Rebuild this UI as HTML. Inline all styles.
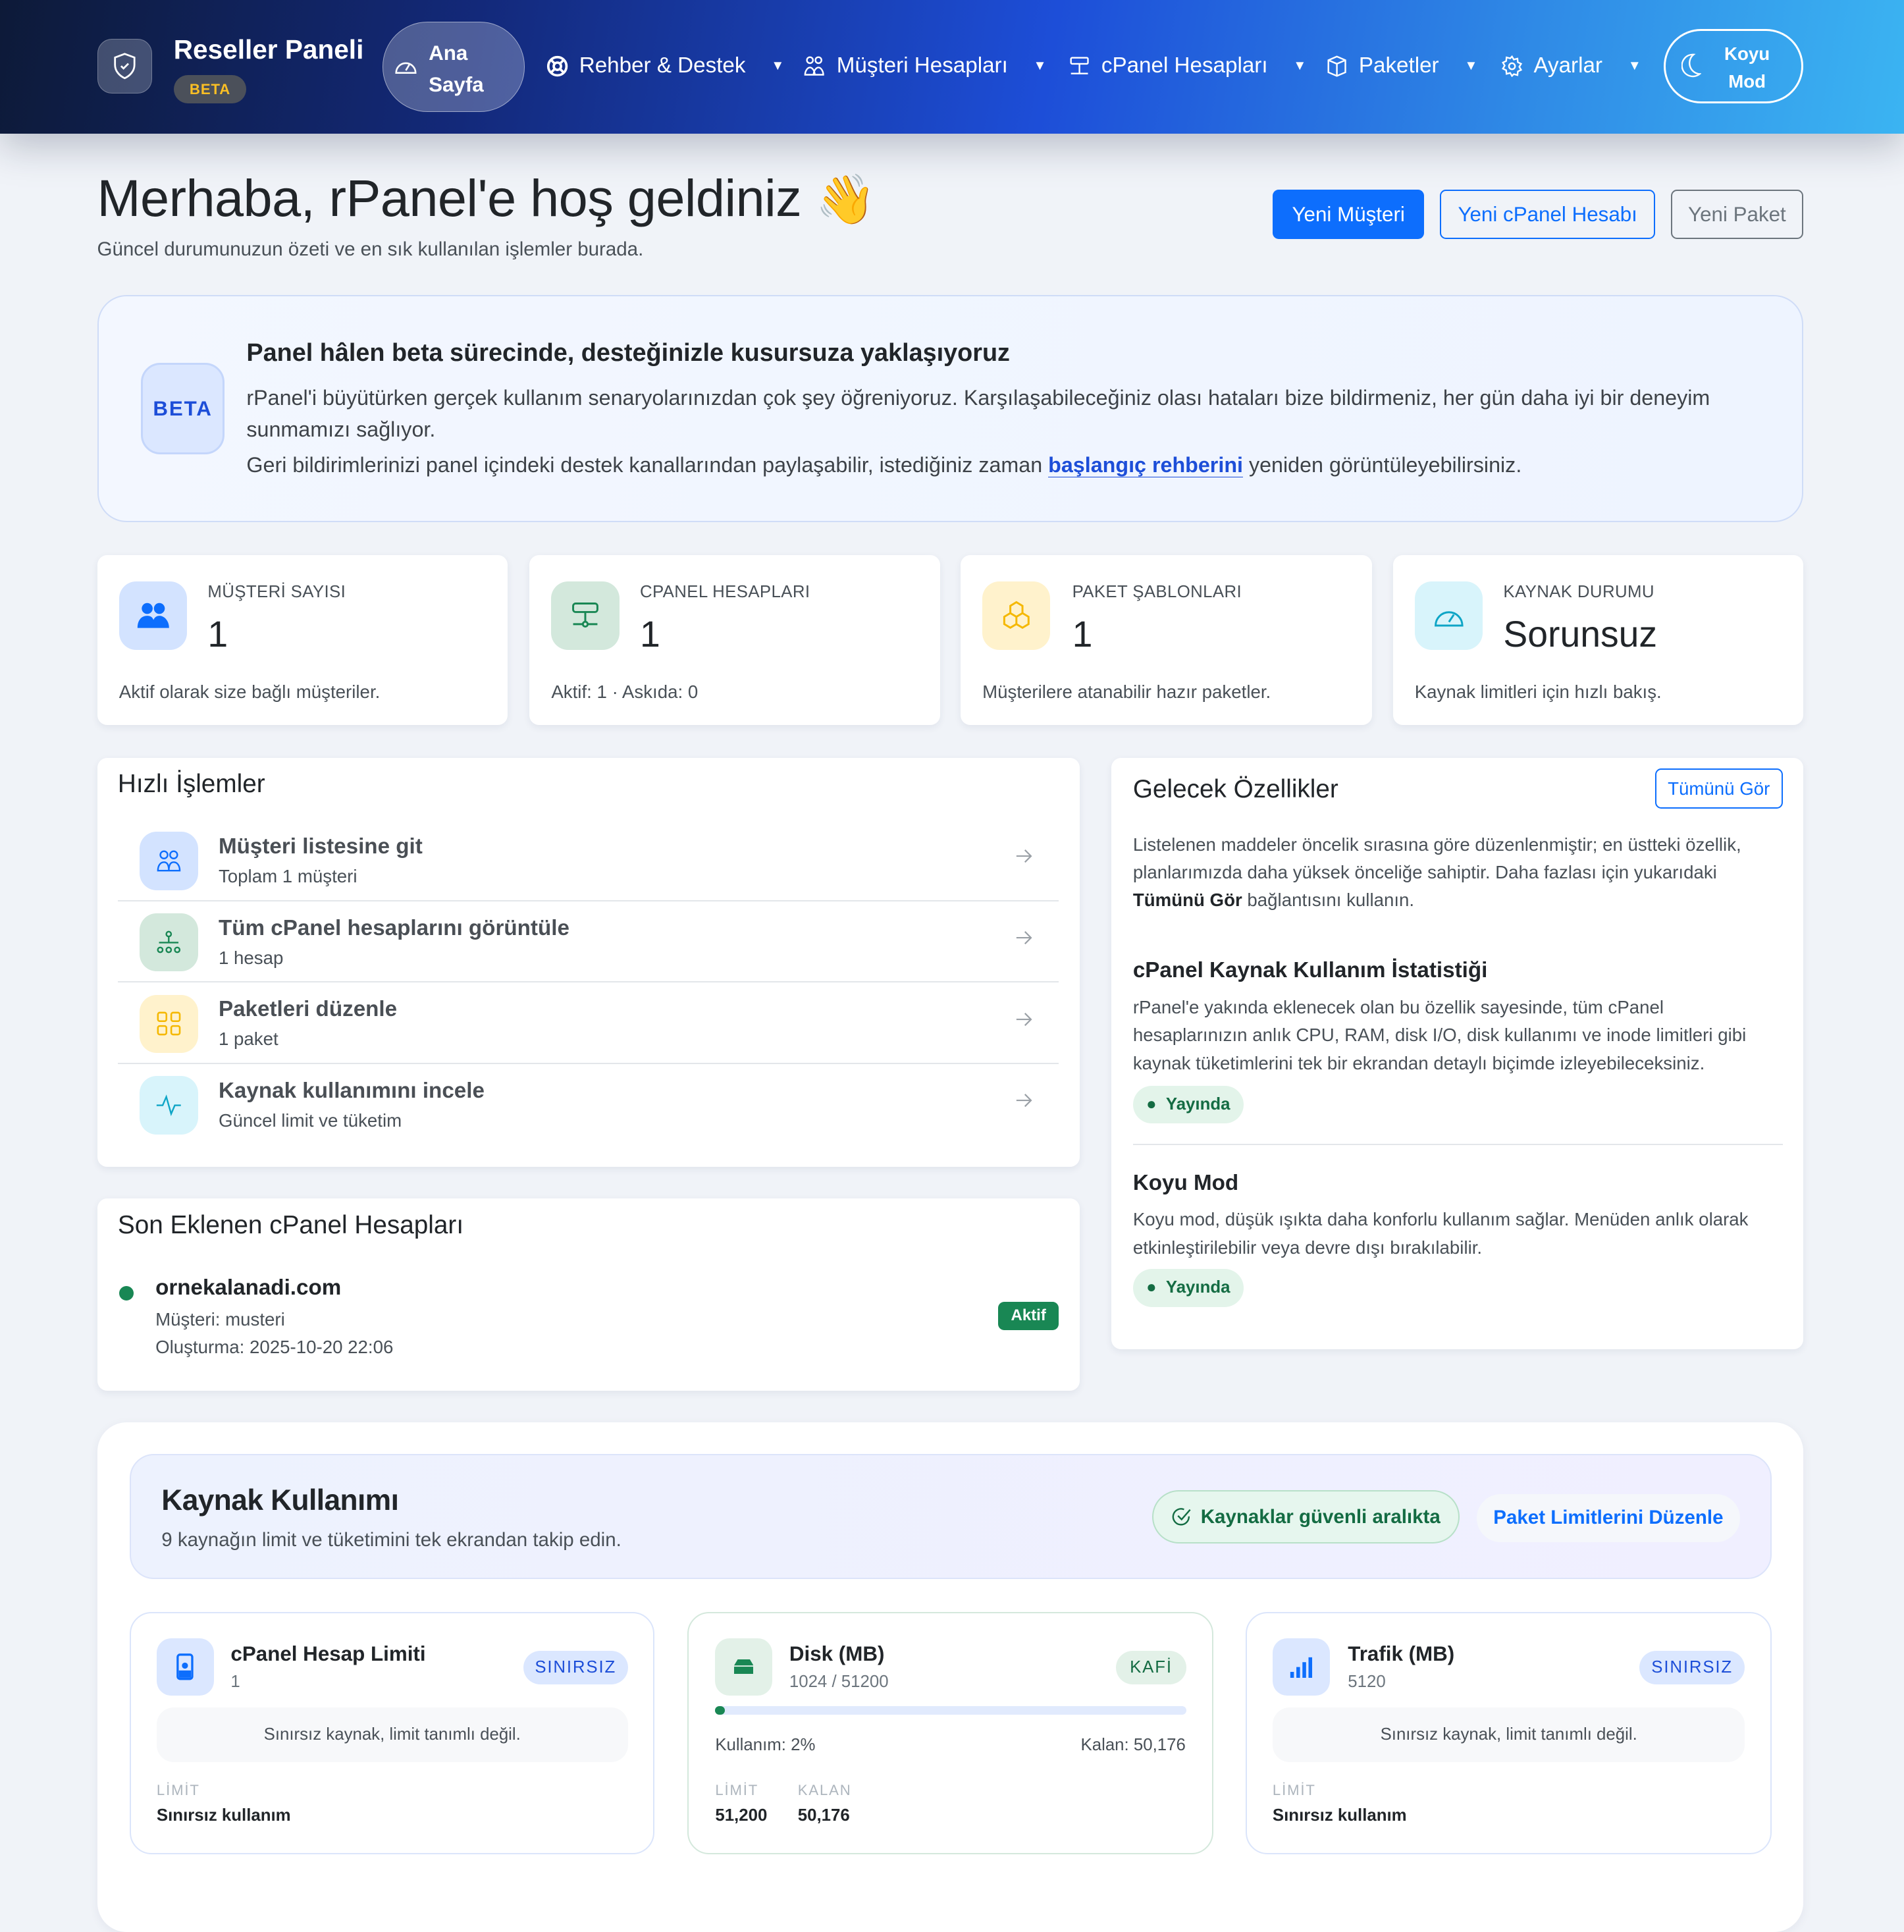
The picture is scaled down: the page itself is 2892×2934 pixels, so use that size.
<!DOCTYPE html>
<html><head><meta charset="utf-8"><style>
html{zoom:1.8444}
*{box-sizing:border-box;margin:0;padding:0}
body{width:1568px;height:1557px;overflow:hidden;background:#f0f3f8;font-family:"Liberation Sans","DejaVu Sans",sans-serif;color:#212529;position:relative}
.a{position:absolute}
.hdr{left:0;top:0;width:1568px;height:110px;background:linear-gradient(100deg,#0d1a38 0%,#13297a 25%,#1d4ed8 55%,#2f8ae6 80%,#3bb4f2 100%);box-shadow:0 10px 30px rgba(20,30,60,.25)}
.nav{color:#fff;font-size:18px;top:44px;display:flex;align-items:center;gap:9px;font-weight:500}
.car{font-size:11px;margin-left:12px}
.card{background:#fff;border-radius:8px;box-shadow:0 2px 6px rgba(30,40,80,.07)}
.ic{width:56px;height:56px;border-radius:14px;display:flex;align-items:center;justify-content:center}
.lbl{font-size:14px;color:#495057;letter-spacing:.2px}
.val{font-size:30px;color:#212529}
.dsc{font-size:15px;color:#495057}
.row{left:17px;width:775px;height:67px;border-bottom:1.5px solid #e3e6ea}
.row .ic{width:48px;height:48px;position:absolute;left:18px;top:10px}
.row .t{position:absolute;left:83px;top:12px;font-size:18px;font-weight:bold;color:#4a4f55}
.row .s{position:absolute;left:83px;top:38px;font-size:15px;color:#495057}
.row .ar{position:absolute;right:22px;top:22px}
.pill{border-radius:20px;font-size:14px;font-weight:bold;display:flex;align-items:center;justify-content:center}
.rc{background:#fff;border-radius:18px;border:1.5px solid #dbe5fb}
</style></head><body>
<div class="a hdr"></div>
<div class="a" style="left:80px;top:32px;width:45px;height:45px;border-radius:12px;background:rgba(255,255,255,.22);border:1px solid rgba(255,255,255,.25);display:flex;align-items:center;justify-content:center">
<svg width="20" height="22" viewBox="0 0 20 22" fill="none" stroke="#fff" stroke-width="1.5"><path d="M10 1L2 4v6c0 5 3.5 9 8 11 4.5-2 8-6 8-11V4z"/><path d="M7 11l2 2 4-4"/></svg></div>
<div class="a" style="left:143px;top:28px;color:#fff;font-size:22px;font-weight:bold">Reseller Paneli</div>
<div class="a" style="left:143px;top:62px;width:60px;height:23px;border-radius:12px;background:#4b505a;color:#fbbf24;font-size:12px;font-weight:bold;display:flex;align-items:center;justify-content:center;letter-spacing:.5px">BETA</div>
<div class="a" style="left:315px;top:18px;width:117px;height:74px;border-radius:37px;background:rgba(255,255,255,.25);border:1px solid rgba(255,255,255,.45)"></div>
<svg class="a" style="left:324px;top:45px" width="20" height="18" viewBox="0 0 20 18" fill="none" stroke="#fff" stroke-width="1.4"><path d="M2 15a8 8 0 1 1 16 0z"/><path d="M10 13l3-5"/></svg>
<div class="a" style="left:353px;top:31px;color:#fff;font-size:17px;font-weight:bold;line-height:26px">Ana<br>Sayfa</div>
<div class="a nav" style="left:450px"><svg width="18" height="18" viewBox="0 0 18 18" fill="none" stroke="#fff" stroke-width="2"><circle cx="9" cy="9" r="7.5"/><circle cx="9" cy="9" r="3"/><path d="M4 4l3 3M14 4l-3 3M4 14l3-3M14 14l-3-3"/></svg>Rehber &amp; Destek<span class="car">▼</span></div>
<div class="a nav" style="left:662px"><svg width="18" height="18" viewBox="0 0 18 18" fill="none" stroke="#fff" stroke-width="1.3"><circle cx="5" cy="4" r="2.5"/><circle cx="12" cy="4" r="2.5"/><path d="M1 16c0-3 2-6 4-6s4 3 4 6zM8 16c0-3 2-6 4-6s4 3 4 6z"/></svg>Müşteri Hesapları<span class="car">▼</span></div>
<div class="a nav" style="left:880px"><svg width="18" height="18" viewBox="0 0 18 18" fill="none" stroke="#fff" stroke-width="1.3"><rect x="2" y="2" width="14" height="5" rx="1"/><path d="M9 7v8M2 15h14"/></svg>cPanel Hesapları<span class="car">▼</span></div>
<div class="a nav" style="left:1092px"><svg width="18" height="18" viewBox="0 0 18 18" fill="none" stroke="#fff" stroke-width="1.3"><path d="M9 1l7 3v10l-7 3-7-3V4zM2 4l7 3 7-3M9 7v10"/></svg>Paketler<span class="car">▼</span></div>
<div class="a nav" style="left:1236px"><svg width="18" height="18" viewBox="0 0 18 18" fill="none" stroke="#fff" stroke-width="1.3"><circle cx="9" cy="9" r="2.5"/><path d="M9 1l1.5 2.5 3-.8.3 3 2.7 1.3-1.5 2.5 1.5 2.5-2.7 1.3-.3 3-3-.8L9 17l-1.5-2.5-3 .8-.3-3L1.5 11 3 8.5 1.5 6l2.7-1.3.3-3 3 .8z"/></svg>Ayarlar<span class="car">▼</span></div>
<div class="a" style="left:1370px;top:24px;width:115px;height:61px;border-radius:31px;border:2px solid #fff"></div>
<svg class="a" style="left:1385px;top:44px" width="16" height="20" viewBox="0 0 16 20" fill="none" stroke="#fff" stroke-width="1.3"><path d="M10 1a9 9 0 1 0 5 16A9 9 0 0 1 10 1z"/></svg>
<div class="a" style="left:1420px;top:33px;color:#fff;font-size:15px;font-weight:bold;line-height:23px;text-align:center">Koyu<br>Mod</div>

<div class="a" style="left:80px;top:138px;font-size:43px;font-weight:500;letter-spacing:-.3px">Merhaba, rPanel'e hoş geldiniz <span style="font-size:40px">👋</span></div>
<div class="a" style="left:80px;top:196px;font-size:16px;color:#495057">Güncel durumunuzun özeti ve en sık kullanılan işlemler burada.</div>
<div class="a" style="left:1048px;top:156px;width:125px;height:41px;border-radius:5px;background:#0d6efd;color:#fff;font-size:17px;display:flex;align-items:center;justify-content:center">Yeni Müşteri</div>
<div class="a" style="left:1186px;top:156px;width:177px;height:41px;border-radius:5px;border:1.5px solid #0d6efd;color:#0d6efd;font-size:17px;display:flex;align-items:center;justify-content:center">Yeni cPanel Hesabı</div>
<div class="a" style="left:1376px;top:156px;width:109px;height:41px;border-radius:5px;border:1.5px solid #6c757d;color:#6c757d;font-size:17px;display:flex;align-items:center;justify-content:center">Yeni Paket</div>

<div class="a" style="left:80px;top:243px;width:1405px;height:187px;border-radius:24px;background:linear-gradient(90deg,#f3f7ff,#eef4ff);border:1.5px solid #cfdcf7"></div>
<div class="a" style="left:116px;top:299px;width:69px;height:75px;border-radius:16px;background:#dbe7ff;border:2px solid #c4d6fb;color:#1d4ed8;font-weight:bold;font-size:17px;letter-spacing:1px;display:flex;align-items:center;justify-content:center">BETA</div>
<div class="a" style="left:203px;top:279px;font-size:20.5px;font-weight:bold">Panel hâlen beta sürecinde, desteğinizle kusursuza yaklaşıyoruz</div>
<div class="a" style="left:203px;top:315px;width:1250px;font-size:17.5px;line-height:26px;color:#3d4248">rPanel'i büyütürken gerçek kullanım senaryolarınızdan çok şey öğreniyoruz. Karşılaşabileceğiniz olası hataları bize bildirmeniz, her gün daha iyi bir deneyim sunmamızı sağlıyor.</div>
<div class="a" style="left:203px;top:373px;font-size:17.5px;color:#3d4248">Geri bildirimlerinizi panel içindeki destek kanallarından paylaşabilir, istediğiniz zaman <b style="color:#1d4ed8;border-bottom:1px solid #1d4ed8">başlangıç rehberini</b> yeniden görüntüleyebilirsiniz.</div>

<div class="a card" style="left:80px;top:457px;width:338px;height:140px"></div>
<div class="a card" style="left:436px;top:457px;width:338px;height:140px"></div>
<div class="a card" style="left:791px;top:457px;width:339px;height:140px"></div>
<div class="a card" style="left:1147px;top:457px;width:338px;height:140px"></div>
<div class="a ic" style="left:98px;top:479px;background:#d3e3ff"><svg width="28" height="24" viewBox="0 0 28 24" fill="#0d6efd"><circle cx="9" cy="6" r="4.5"/><circle cx="19" cy="6" r="4.5"/><path d="M1 22c0-6 3-10 8-10s6 4 6 10zM13 22c0-6 2-10 6-10s8 4 8 10z"/></svg></div>
<div class="a ic" style="left:454px;top:479px;background:#d3e8dc"><svg width="26" height="26" viewBox="0 0 26 26" fill="none" stroke="#198754" stroke-width="1.6"><rect x="3" y="3" width="20" height="7" rx="2"/><path d="M13 10v10M3 20h20"/><circle cx="13" cy="20" r="2" fill="#d3e8dc"/></svg></div>
<div class="a ic" style="left:809px;top:479px;background:#fff2cc"><svg width="28" height="28" viewBox="0 0 28 28" fill="none" stroke="#f5b800" stroke-width="1.6"><path d="M14 3l5 3v6l-5 3-5-3V6zM9 12l5 3v6l-5 3-5-3v-6zM19 12l5 3v6l-5 3-5-3v-6z"/></svg></div>
<div class="a ic" style="left:1165px;top:479px;background:#d8f4fb"><svg width="28" height="22" viewBox="0 0 28 22" fill="none" stroke="#0ea5c6" stroke-width="1.6"><path d="M3 19a11 11 0 1 1 22 0z"/><path d="M14 16l4-6"/></svg></div>
<div class="a lbl" style="left:171px;top:480px">MÜŞTERİ SAYISI</div><div class="a val" style="left:171px;top:505px">1</div><div class="a dsc" style="left:98px;top:561px">Aktif olarak size bağlı müşteriler.</div>
<div class="a lbl" style="left:527px;top:480px">CPANEL HESAPLARI</div><div class="a val" style="left:527px;top:505px">1</div><div class="a dsc" style="left:454px;top:561px">Aktif: 1 · Askıda: 0</div>
<div class="a lbl" style="left:883px;top:480px">PAKET ŞABLONLARI</div><div class="a val" style="left:883px;top:505px">1</div><div class="a dsc" style="left:809px;top:561px">Müşterilere atanabilir hazır paketler.</div>
<div class="a lbl" style="left:1238px;top:480px">KAYNAK DURUMU</div><div class="a val" style="left:1238px;top:505px;font-weight:500">Sorunsuz</div><div class="a dsc" style="left:1165px;top:561px">Kaynak limitleri için hızlı bakış.</div>

<div class="a card" style="left:80px;top:624px;width:809px;height:337px">
<div class="a" style="left:17px;top:10px;font-size:21px">Hızlı İşlemler</div>
<div class="a row" style="top:51px"><div class="ic" style="background:#d3e3ff"><svg width="20" height="20" viewBox="0 0 20 20" fill="none" stroke="#0d6efd" stroke-width="1.3"><circle cx="6" cy="5" r="3"/><circle cx="14" cy="5" r="3"/><path d="M1 18c0-4 2-7 5-7s4 3 4 7zM10 18c0-4 1-7 4-7s5 3 5 7z"/></svg></div><div class="t">Müşteri listesine git</div><div class="s">Toplam 1 müşteri</div><div class="ar"><svg width="14" height="12" viewBox="0 0 14 12" fill="none" stroke="#9aa0a6" stroke-width="1.2"><path d="M1 6h12M8 1l5 5-5 5"/></svg></div></div>
<div class="a row" style="top:118px"><div class="ic" style="background:#d3e8dc"><svg width="22" height="20" viewBox="0 0 22 20" fill="none" stroke="#198754" stroke-width="1.3"><circle cx="11" cy="3" r="2"/><path d="M11 5v5M3 10h16"/><circle cx="4" cy="16" r="2"/><circle cx="11" cy="16" r="2"/><circle cx="18" cy="16" r="2"/></svg></div><div class="t">Tüm cPanel hesaplarını görüntüle</div><div class="s">1 hesap</div><div class="ar"><svg width="14" height="12" viewBox="0 0 14 12" fill="none" stroke="#9aa0a6" stroke-width="1.2"><path d="M1 6h12M8 1l5 5-5 5"/></svg></div></div>
<div class="a row" style="top:185px"><div class="ic" style="background:#fff2cc"><svg width="20" height="20" viewBox="0 0 20 20" fill="none" stroke="#f5b800" stroke-width="1.4"><rect x="1" y="1" width="7" height="7" rx="1.5"/><rect x="12" y="1" width="7" height="7" rx="1.5"/><rect x="1" y="12" width="7" height="7" rx="1.5"/><rect x="12" y="12" width="7" height="7" rx="1.5"/></svg></div><div class="t">Paketleri düzenle</div><div class="s">1 paket</div><div class="ar"><svg width="14" height="12" viewBox="0 0 14 12" fill="none" stroke="#9aa0a6" stroke-width="1.2"><path d="M1 6h12M8 1l5 5-5 5"/></svg></div></div>
<div class="a row" style="top:252px;border:none"><div class="ic" style="background:#d8f4fb"><svg width="22" height="18" viewBox="0 0 22 18" fill="none" stroke="#0ea5c6" stroke-width="1.3"><path d="M1 9h5l3-7 4 14 3-7h5"/></svg></div><div class="t">Kaynak kullanımını incele</div><div class="s">Güncel limit ve tüketim</div><div class="ar"><svg width="14" height="12" viewBox="0 0 14 12" fill="none" stroke="#9aa0a6" stroke-width="1.2"><path d="M1 6h12M8 1l5 5-5 5"/></svg></div></div>
</div>

<div class="a card" style="left:80px;top:987px;width:809px;height:158px">
<div class="a" style="left:17px;top:10px;font-size:21px">Son Eklenen cPanel Hesapları</div>
<div class="a" style="left:18px;top:72px;width:12px;height:12px;border-radius:6px;background:#198754"></div>
<div class="a" style="left:48px;top:63px;font-size:18px;font-weight:bold">ornekalanadi.com</div>
<div class="a" style="left:48px;top:88px;font-size:15px;color:#495057;line-height:23px">Müşteri: musteri<br>Oluşturma: 2025-10-20 22:06</div>
<div class="a" style="left:742px;top:85px;width:50px;height:23px;border-radius:5px;background:#198754;color:#fff;font-size:13px;font-weight:bold;display:flex;align-items:center;justify-content:center">Aktif</div>
</div>

<div class="a card" style="left:915px;top:624px;width:570px;height:487px">
<div class="a" style="left:18px;top:14px;font-size:21px">Gelecek Özellikler</div>
<div class="a" style="left:448px;top:9px;width:105px;height:33px;border:1.5px solid #0d6efd;border-radius:5px;color:#0d6efd;font-size:15px;display:flex;align-items:center;justify-content:center">Tümünü Gör</div>
<div class="a" style="left:18px;top:60px;width:535px;font-size:15px;line-height:23px;color:#495057">Listelenen maddeler öncelik sırasına göre düzenlenmiştir; en üstteki özellik, planlarımızda daha yüksek önceliğe sahiptir. Daha fazlası için yukarıdaki <b style="color:#212529">Tümünü Gör</b> bağlantısını kullanın.</div>
<div class="a" style="left:18px;top:165px;font-size:18px;font-weight:bold">cPanel Kaynak Kullanım İstatistiği</div>
<div class="a" style="left:18px;top:194px;width:535px;font-size:15px;line-height:23px;color:#495057">rPanel'e yakında eklenecek olan bu özellik sayesinde, tüm cPanel hesaplarınızın anlık CPU, RAM, disk I/O, disk kullanımı ve inode limitleri gibi kaynak tüketimlerini tek bir ekrandan detaylı biçimde izleyebileceksiniz.</div>
<div class="a pill" style="left:18px;top:270px;width:91px;height:31px;background:#e3f4ea;color:#146c43">● &nbsp;Yayında</div>
<div class="a" style="left:18px;top:318px;width:535px;border-top:1.5px solid #e3e6ea"></div>
<div class="a" style="left:18px;top:340px;font-size:18px;font-weight:bold">Koyu Mod</div>
<div class="a" style="left:18px;top:369px;width:535px;font-size:15px;line-height:23px;color:#495057">Koyu mod, düşük ışıkta daha konforlu kullanım sağlar. Menüden anlık olarak etkinleştirilebilir veya devre dışı bırakılabilir.</div>
<div class="a pill" style="left:18px;top:421px;width:91px;height:31px;background:#e3f4ea;color:#146c43">● &nbsp;Yayında</div>
</div>

<div class="a" style="left:80px;top:1171px;width:1405px;height:420px;border-radius:24px;background:#fff;box-shadow:0 2px 8px rgba(30,40,80,.06)"></div>
<div class="a" style="left:107px;top:1197px;width:1352px;height:103px;border-radius:20px;background:linear-gradient(90deg,#edf2fe,#f0efff);border:1.5px solid #dce4fa"></div>
<div class="a" style="left:133px;top:1222px;font-size:24px;font-weight:bold;letter-spacing:-.3px">Kaynak Kullanımı</div>
<div class="a" style="left:133px;top:1259px;font-size:16px;color:#495057">9 kaynağın limit ve tüketimini tek ekrandan takip edin.</div>
<div class="a pill" style="left:949px;top:1227px;width:253px;height:44px;border-radius:22px;background:#e6f6ee;border:1.5px solid #b7e0c8;color:#146c43;font-size:16px"><svg width="16" height="16" viewBox="0 0 16 16" fill="none" stroke="#146c43" stroke-width="1.3" style="margin-right:8px"><path d="M14 7.5A6.5 6.5 0 1 1 10 1.8"/><path d="M5 7l3 3 7-8"/></svg>Kaynaklar güvenli aralıkta</div>
<div class="a pill" style="left:1216px;top:1230px;width:217px;height:40px;border-radius:20px;background:#f5f7fb;color:#0d6efd;font-size:16px">Paket Limitlerini Düzenle</div>

<div class="a rc" style="left:107px;top:1327px;width:432px;height:200px"></div>
<div class="a rc" style="left:566px;top:1327px;width:433px;height:200px;border-color:#d4e8dc"></div>
<div class="a rc" style="left:1026px;top:1327px;width:433px;height:200px"></div>

<div class="a ic" style="left:129px;top:1349px;width:47px;height:47px;border-radius:12px;background:#dbe7ff"><svg width="14" height="22" viewBox="0 0 14 22"><rect x="1" y="1" width="12" height="20" rx="2" fill="none" stroke="#0d6efd" stroke-width="1.8"/><circle cx="7" cy="10" r="2.5" fill="#0d6efd"/><rect x="2" y="14" width="10" height="6" fill="#0d6efd"/></svg></div>
<div class="a" style="left:190px;top:1352px;font-size:17px;font-weight:bold">cPanel Hesap Limiti</div>
<div class="a" style="left:190px;top:1377px;font-size:14px;color:#6c757d">1</div>
<div class="a pill" style="left:431px;top:1359px;width:86px;height:28px;background:#dbe7ff;color:#1d4ed8;font-weight:500;letter-spacing:1px">SINIRSIZ</div>
<div class="a" style="left:129px;top:1406px;width:388px;height:45px;border-radius:14px;background:#f7f8fa;font-size:14px;color:#495057;display:flex;align-items:center;justify-content:center">Sınırsız kaynak, limit tanımlı değil.</div>
<div class="a" style="left:129px;top:1467px;font-size:12px;color:#adb5bd;letter-spacing:1px">LİMİT</div>
<div class="a" style="left:129px;top:1487px;font-size:14px;font-weight:bold">Sınırsız kullanım</div>

<div class="a ic" style="left:589px;top:1349px;width:47px;height:47px;border-radius:12px;background:#e3f1e8"><svg width="16" height="12" viewBox="0 0 16 12"><path d="M3 0h10l3 5v7H0V5z" fill="#198754"/><rect x="0" y="5" width="16" height="1" fill="#e3f1e8"/></svg></div>
<div class="a" style="left:650px;top:1352px;font-size:17px;font-weight:bold">Disk (MB)</div>
<div class="a" style="left:650px;top:1377px;font-size:14px;color:#6c757d">1024 / 51200</div>
<div class="a pill" style="left:919px;top:1359px;width:58px;height:28px;background:#e3f1e8;color:#146c43;font-weight:500;letter-spacing:1px">KAFİ</div>
<div class="a" style="left:589px;top:1405px;width:388px;height:7px;border-radius:4px;background:#e1eafd"></div>
<div class="a" style="left:589px;top:1405px;width:8px;height:7px;border-radius:4px;background:#198754"></div>
<div class="a" style="left:589px;top:1429px;font-size:14px;color:#495057">Kullanım: 2%</div>
<div class="a" style="left:890px;top:1429px;font-size:14px;color:#495057">Kalan: 50,176</div>
<div class="a" style="left:589px;top:1467px;font-size:12px;color:#adb5bd;letter-spacing:1px">LİMİT</div>
<div class="a" style="left:657px;top:1467px;font-size:12px;color:#adb5bd;letter-spacing:1px">KALAN</div>
<div class="a" style="left:589px;top:1487px;font-size:14px;font-weight:bold">51,200</div>
<div class="a" style="left:657px;top:1487px;font-size:14px;font-weight:bold">50,176</div>

<div class="a ic" style="left:1048px;top:1349px;width:47px;height:47px;border-radius:12px;background:#dbe7ff"><svg width="20" height="18" viewBox="0 0 20 18" fill="#0d6efd"><rect x="1" y="13" width="3" height="5"/><rect x="6" y="9" width="3" height="9"/><rect x="11" y="5" width="3" height="13"/><rect x="16" y="1" width="3" height="17"/></svg></div>
<div class="a" style="left:1110px;top:1352px;font-size:17px;font-weight:bold">Trafik (MB)</div>
<div class="a" style="left:1110px;top:1377px;font-size:14px;color:#6c757d">5120</div>
<div class="a pill" style="left:1350px;top:1359px;width:87px;height:28px;background:#dbe7ff;color:#1d4ed8;font-weight:500;letter-spacing:1px">SINIRSIZ</div>
<div class="a" style="left:1048px;top:1406px;width:389px;height:45px;border-radius:14px;background:#f7f8fa;font-size:14px;color:#495057;display:flex;align-items:center;justify-content:center">Sınırsız kaynak, limit tanımlı değil.</div>
<div class="a" style="left:1048px;top:1467px;font-size:12px;color:#adb5bd;letter-spacing:1px">LİMİT</div>
<div class="a" style="left:1048px;top:1487px;font-size:14px;font-weight:bold">Sınırsız kullanım</div>
</body></html>
